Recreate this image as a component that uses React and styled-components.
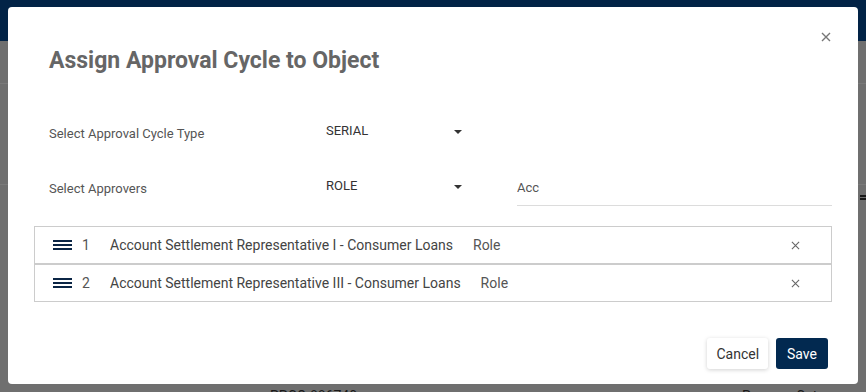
import React from "react";
import styled, { createGlobalStyle } from "styled-components";

const GlobalStyle = createGlobalStyle`
  html, body {
    margin: 0;
    padding: 0;
    background: #dedede;
    font-family: Roboto, "Noto Sans", Arial, sans-serif;
  }
  * { box-sizing: border-box; }
`;

/* page behind the dialog */
const Page = styled.div`
  width: 866px;
  height: 392px;
  overflow: hidden;
  display: flex;
  flex-direction: column;
  & > * { flex-shrink: 0; }
`;
const TopBar = styled.div`
  height: 41px;
  background: #04478c;
`;
const Toolbar = styled.div`
  height: 43px;
  border-bottom: 1px solid #f4f4f4;
`;
const TableHead = styled.div`
  margin-top: 100px;
  height: 67px;
  border-top: 1px solid #f4f4f4;
  display: flex;
  justify-content: flex-end;
  padding: 10px 0 0 0;
`;
const SortMark = styled.div`
  width: 8px;
  height: 5px;
  margin-right: -2px;
  border-top: 2px solid #333;
  border-bottom: 2px solid #333;
`;
const BgRow = styled.div`
  height: 67px;
  display: grid;
  grid-template-columns: 270px 472px 1fr;
  font-size: 14px;
  color: #333;
  padding-top: ${(p) => p.$pad || 0}px;
`;

/* dialog */
const Backdrop = styled.div`
  position: fixed;
  inset: 0;
  background: rgba(0, 0, 0, 0.5);
  padding: 7px 8px;
`;
const Modal = styled.div`
  position: relative;
  background: #fff;
  border-radius: 4px;
  padding: 41px 26px 15px 26px;
  display: flex;
  flex-direction: column;
`;
const CloseButton = styled.button`
  position: absolute;
  top: 25px;
  right: 27px;
  width: 10px;
  height: 10px;
  padding: 0;
  border: none;
  background: none;
  display: flex;
  cursor: pointer;
`;
const Title = styled.h2`
  margin: 0;
  padding-left: 15px;
  font-size: 23px;
  line-height: 26px;
  font-weight: 700;
  color: #666;
`;
const Form = styled.div`
  margin-top: 41px;
  padding-left: 15px;
  display: grid;
  grid-template-columns: 277px 191px 1fr;
  grid-auto-rows: 36px;
  row-gap: 19px;
  align-items: center;
`;
const Label = styled.div`
  font-size: 13px;
  color: #555;
`;
const Select = styled.div`
  width: 136px;
  height: 36px;
  display: flex;
  align-items: center;
  justify-content: space-between;
  padding-bottom: 5px;
  font-size: 13px;
  color: #333;
  cursor: pointer;
`;
const Caret = styled.span`
  width: 0;
  height: 0;
  margin-bottom: -3px;
  border-left: 4px solid transparent;
  border-right: 4px solid transparent;
  border-top: 4px solid #333;
`;
const SearchInput = styled.input`
  height: 36px;
  width: 100%;
  border: none;
  border-bottom: 1px solid #dcdcdc;
  padding: 0;
  font-family: inherit;
  font-size: 13px;
  color: #555;
  outline: none;
`;
const List = styled.div`
  margin-top: 20px;
  display: flex;
  flex-direction: column;
`;
const Item = styled.div`
  height: 38px;
  border: 1px solid #cccccc;
  display: flex;
  align-items: center;
  padding: 0 31px 0 18px;
  font-size: 14px;
  color: #444;
`;
const Handle = styled.svg`
  flex-shrink: 0;
  margin-top: -1px;
  cursor: grab;
`;
const Index = styled.span`
  width: 28px;
  margin-left: 10px;
  color: #555;
`;
const Name = styled.span`
  margin-right: 20px;
`;
const Kind = styled.span`
  color: #555;
`;
const RemoveButton = styled.button`
  margin-left: auto;
  width: 9px;
  height: 9px;
  padding: 0;
  border: none;
  background: none;
  display: flex;
  cursor: pointer;
`;
const Footer = styled.div`
  margin-top: 36px;
  display: flex;
  justify-content: flex-end;
  gap: 8px;
  padding-right: 4px;
`;
const Button = styled.button`
  height: 31px;
  padding: 0 ${(p) => (p.$primary ? 11 : 9)}px;
  border: none;
  border-radius: 3px;
  font-family: inherit;
  font-size: 14px;
  background: ${(p) => (p.$primary ? "#022950" : "#fff")};
  color: ${(p) => (p.$primary ? "#fff" : "#333")};
  box-shadow: ${(p) =>
    p.$primary ? "none" : "0 1px 4px rgba(0, 0, 0, 0.18)"};
  cursor: pointer;
`;

const Cross = ({ size, color, width }) => (
  <svg width={size} height={size} viewBox="0 0 10 10">
    <path d="M1 1L9 9M9 1L1 9" stroke={color} strokeWidth={width} />
  </svg>
);

const approvers = [
  { name: "Account Settlement Representative I - Consumer Loans", kind: "Role" },
  { name: "Account Settlement Representative III - Consumer Loans", kind: "Role" },
];

export default function App() {
  return (
    <>
      <GlobalStyle />
      <Page>
        <TopBar />
        <Toolbar />
        <TableHead>
          <SortMark />
        </TableHead>
        <BgRow />
        <BgRow />
        <BgRow $pad={3}>
          <span />
          <span>PPCO 886740</span>
          <span>Process Cat</span>
        </BgRow>
      </Page>
      <Backdrop>
        <Modal>
          <CloseButton aria-label="close">
            <Cross size={10} color="#777" width={1.4} />
          </CloseButton>
          <Title>Assign Approval Cycle to Object</Title>
          <Form>
            <Label>Select Approval Cycle Type</Label>
            <Select>
              SERIAL
              <Caret />
            </Select>
            <span />
            <Label>Select Approvers</Label>
            <Select>
              ROLE
              <Caret />
            </Select>
            <SearchInput defaultValue="Acc" />
          </Form>
          <List>
            {approvers.map((a, i) => (
              <Item key={i}>
                <Handle width="19" height="10" viewBox="0 0 19 10">
                  <rect x="0" y="0" width="19" height="2" fill="#0b2545" />
                  <rect x="0" y="4" width="19" height="2" fill="#0b2545" />
                  <rect x="0" y="8" width="19" height="2" fill="#0b2545" />
                </Handle>
                <Index>{i + 1}</Index>
                <Name>{a.name}</Name>
                <Kind>{a.kind}</Kind>
                <RemoveButton aria-label="remove">
                  <Cross size={9} color="#666" width={1.2} />
                </RemoveButton>
              </Item>
            ))}
          </List>
          <Footer>
            <Button>Cancel</Button>
            <Button $primary>Save</Button>
          </Footer>
        </Modal>
      </Backdrop>
    </>
  );
}
